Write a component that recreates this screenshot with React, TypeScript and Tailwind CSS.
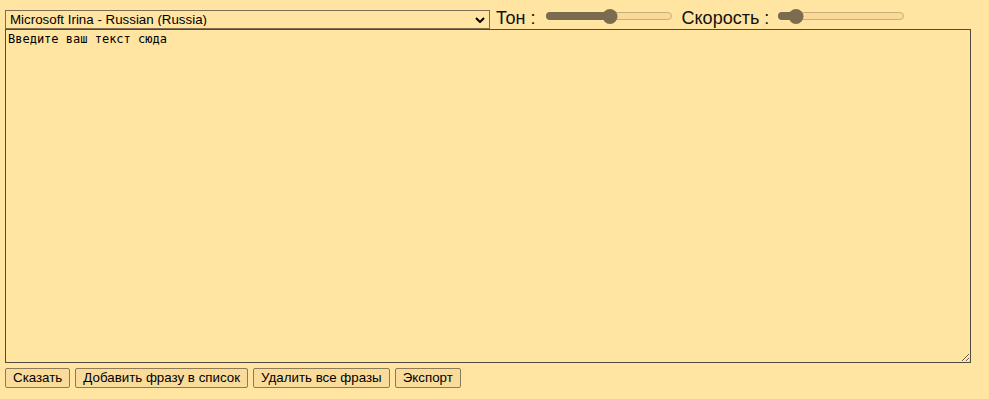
import { useState } from 'react';

const buttonClass =
  'h-[20px] rounded-[2px] border border-[#8c7a57] bg-[#f9dc9c] px-[7px] text-[13.33px] leading-none text-black';

function Slider({ value, label }: { value: number; label: string }) {
  return (
    <div role="slider" aria-label={label} aria-valuenow={value} className="relative mt-[2px] h-[8px] w-[126px]">
      <div className="h-full w-full rounded-full border border-[#c8ad78] bg-[#fbd996]" />
      <div
        className="absolute left-0 top-0 h-full rounded-l-full bg-[#7b6c4f]"
        style={{ width: `${value}%` }}
      />
      <div
        className="absolute top-[-3.5px] h-[15px] w-[15px] -translate-x-1/2 rounded-full bg-[#7b6c4f]"
        style={{ left: `${value}%` }}
      />
    </div>
  );
}

export default function App() {
  const [text, setText] = useState('Введите ваш текст сюда');

  return (
    <div className="min-h-[399px] bg-[#ffe5a1] pl-[5px] pt-[10px] font-['Liberation_Sans',Arial,sans-serif]">
      <div className="flex h-[19px] items-start">
        <div className="relative flex">
          <select className="block h-[19px] w-[485px] appearance-none rounded-none border border-[#7d6e52] bg-transparent pl-[4px] text-[13.33px] leading-none text-black">
            <option>Microsoft Irina - Russian (Russia)</option>
          </select>
          <svg
            className="pointer-events-none absolute right-[5px] top-[7px]"
            width="10"
            height="6"
            viewBox="0 0 10 6"
            fill="none"
            stroke="black"
            strokeWidth="2"
          >
            <path d="M1 1l4 4 4-4" />
          </svg>
        </div>
        <span className="ml-[6px] mt-[-2px] text-[18px] leading-[20px] text-[#111]">Тон :</span>
        <div className="ml-[10px]">
          <Slider value={51} label="Тон" />
        </div>
        <span className="ml-[10px] mt-[-2px] text-[18px] leading-[20px] text-[#111]">Скорость :</span>
        <div className="ml-[9px]">
          <Slider value={14} label="Скорость" />
        </div>
      </div>
      <textarea
        value={text}
        onChange={(e) => setText(e.target.value)}
        className="block h-[334px] w-[966px] resize border border-[#4f4a40] bg-transparent p-[2px] font-['DejaVu_Sans_Mono',monospace] text-[12px] leading-[15px] text-black outline-none"
      />
      <div className="mt-[5px] flex gap-[5px]">
        <button className={buttonClass}>Сказать</button>
        <button className={buttonClass}>Добавить фразу в список</button>
        <button className={buttonClass}>Удалить все фразы</button>
        <button className={buttonClass}>Экспорт</button>
      </div>
    </div>
  );
}
